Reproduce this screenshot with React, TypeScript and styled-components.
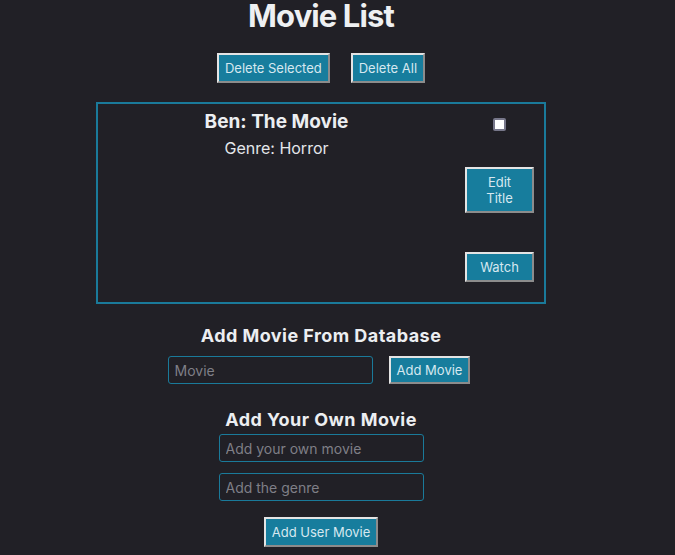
import React from "react";
import styled, { createGlobalStyle } from "styled-components";

const GlobalStyle = createGlobalStyle`
  html, body {
    margin: 0;
    padding: 0;
    background: #212026;
  }
  body {
    font-family: Inter, "Noto Sans", sans-serif;
    color: #eceef1;
  }
`;

const Page = styled.div`
  width: 642px;
  display: flex;
  flex-direction: column;
  align-items: center;
`;

const Title = styled.h1`
  margin: 0;
  font-size: 31px;
  line-height: 31px;
  letter-spacing: -0.9px;
  font-weight: 700;
  color: #eef0f2;
`;

const ButtonRow = styled.div`
  display: flex;
  gap: 21px;
  margin-top: 22px;
`;

const Button = styled.button<{ $w?: number; $h?: number }>`
  box-sizing: border-box;
  font-family: Inter, "Noto Sans", sans-serif;
  font-size: 13px;
  line-height: 16px;
  color: #d6e8f0;
  background: #177d9d;
  padding: 5px 6px;
  border: 2px solid;
  border-color: #e4e4e4 #8c8c8c #8c8c8c #e4e4e4;
  border-radius: 0;
  cursor: pointer;
  ${(p) => (p.$w ? `width: ${p.$w}px; padding-left: 9px; padding-right: 9px;` : "")}
  ${(p) => (p.$h ? `height: ${p.$h}px; padding-top: 0; padding-bottom: 0;` : "")}
`;

const Card = styled.div`
  box-sizing: border-box;
  width: 450px;
  margin-top: 19px;
  border: 2px solid #1a7a9a;
  display: flex;
  gap: 10px;
  padding-right: 10px;
`;

const Info = styled.div`
  flex: 1;
  padding-top: 6px;
  display: flex;
  flex-direction: column;
  align-items: center;
`;

const MovieTitle = styled.div`
  font-size: 19px;
  line-height: 24px;
  font-weight: 700;
  margin-bottom: 4px;
`;

const Genre = styled.div`
  font-size: 16px;
  line-height: 20px;
  color: #e4e6ea;
`;

const Actions = styled.div`
  width: 69px;
  display: flex;
  flex-direction: column;
  align-items: center;
  padding-top: 14px;
  padding-bottom: 20px;
`;

const Check = styled.input`
  appearance: none;
  box-sizing: border-box;
  width: 13px;
  height: 13px;
  margin: 0 0 36px 0;
  background: #ffffff;
  border: 2px solid #77778a;
  border-radius: 2px;
`;

const Spacer = styled.div<{ $h: number }>`
  height: ${(p) => p.$h}px;
`;

const SectionTitle = styled.h2<{ $mt: number }>`
  margin: ${(p) => p.$mt}px 0 0 0;
  font-size: 18px;
  line-height: 22px;
  letter-spacing: 0.45px;
  font-weight: 700;
  color: #eceef1;
`;

const InputRow = styled.div`
  display: flex;
  gap: 16px;
  margin-top: 9px;
  padding-right: 4px;
`;

const TextInput = styled.input<{ $mt?: number }>`
  box-sizing: border-box;
  width: 205px;
  height: 28px;
  margin: ${(p) => p.$mt ?? 0}px 0 0 0;
  padding: 0 6px;
  background: transparent;
  border: 1px solid #1a7a9a;
  border-radius: 3px;
  font-family: Inter, "Noto Sans", sans-serif;
  font-size: 14px;
  color: #e0e0e0;
  outline: none;
  &::placeholder {
    color: #7f7f87;
  }
`;

const Column = styled.div`
  display: flex;
  flex-direction: column;
  align-items: center;
`;

export default function App() {
  return (
    <>
      <GlobalStyle />
      <Page>
        <Title>Movie List</Title>
        <ButtonRow>
          <Button>Delete Selected</Button>
          <Button>Delete All</Button>
        </ButtonRow>
        <Card>
          <Info>
            <MovieTitle>Ben: The Movie</MovieTitle>
            <Genre>Genre: Horror</Genre>
          </Info>
          <Actions>
            <Check type="checkbox" />
            <Button $w={69}>Edit Title</Button>
            <Spacer $h={39} />
            <Button $w={69}>Watch</Button>
          </Actions>
        </Card>
        <SectionTitle $mt={21}>Add Movie From Database</SectionTitle>
        <InputRow>
          <TextInput placeholder="Movie" />
          <Button $h={28}>Add Movie</Button>
        </InputRow>
        <SectionTitle $mt={25}>Add Your Own Movie</SectionTitle>
        <Column>
          <TextInput $mt={3} placeholder="Add your own movie" />
          <TextInput $mt={11} placeholder="Add the genre" />
          <Spacer $h={16} />
          <Button>Add User Movie</Button>
        </Column>
      </Page>
    </>
  );
}
